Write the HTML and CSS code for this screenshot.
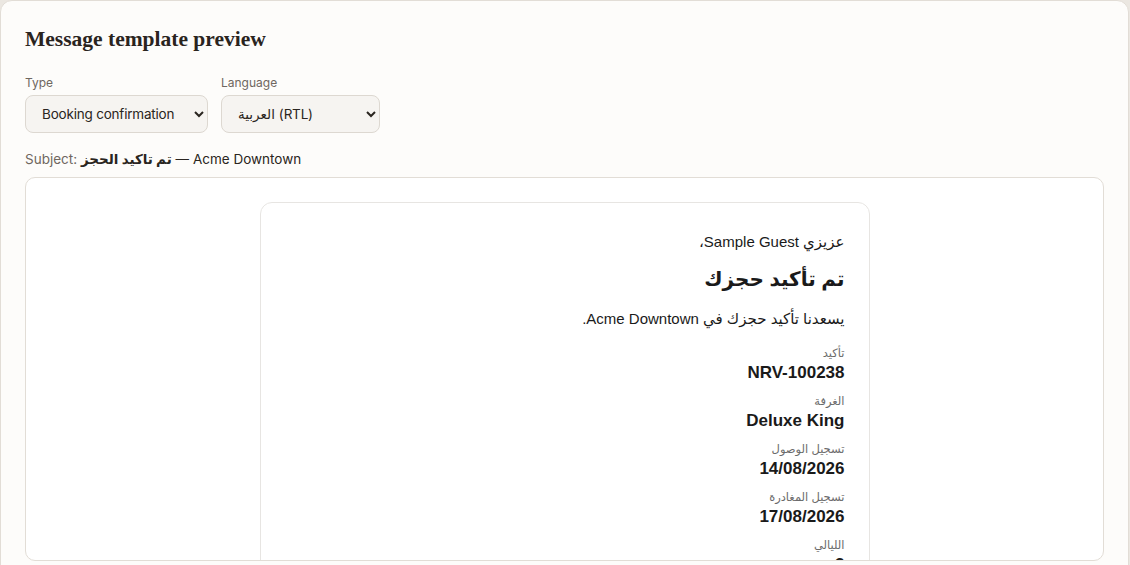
FILE: index.html
```html
<!DOCTYPE html>
<html lang="en">
<head>
  <meta charset="UTF-8" />
  <meta name="viewport" content="width=device-width, initial-scale=1.0" />
  <title>Message template preview</title>
  <link rel="stylesheet" href="styles.css">
</head>
<body>
  <section class="panel">
    <h2>Message template preview</h2>

    <div class="controls">
      <label class="field">
        <span>Type</span>
        <select class="type-select">
          <option>Booking confirmation</option>
        </select>
      </label>
      <label class="field">
        <span>Language</span>
        <select class="lang-select">
          <option>العربية (RTL)</option>
        </select>
      </label>
    </div>

    <div class="subject">Subject: <span class="subject-text"><b>تم تاكيد الحجز</b> — Acme Downtown</span></div>

    <div class="preview">
      <div class="email" dir="rtl">
        <p class="greeting">عزيزي Sample Guest،</p>
        <h3>تم تأكيد حجزك</h3>
        <p class="intro">يسعدنا تأكيد حجزك في Acme Downtown.</p>

        <div class="detail">
          <div class="detail-label">تأكيد</div>
          <div class="detail-value">NRV-100238</div>
        </div>
        <div class="detail">
          <div class="detail-label">الغرفة</div>
          <div class="detail-value">Deluxe King</div>
        </div>
        <div class="detail">
          <div class="detail-label">تسجيل الوصول</div>
          <div class="detail-value">14/08/2026</div>
        </div>
        <div class="detail">
          <div class="detail-label">تسجيل المغادرة</div>
          <div class="detail-value">17/08/2026</div>
        </div>
        <div class="detail">
          <div class="detail-label">الليالي</div>
          <div class="detail-value">3</div>
        </div>
      </div>
    </div>
  </section>
</body>
</html>
```

FILE: styles.css
```css
body {
  margin: 0;
  padding: 0;
  background: #ebe7e1;
  font-family: Inter, "Noto Sans", "DejaVu Sans", sans-serif;
  color: #2a2520;
  height: 565px;
  overflow: hidden;
}

.panel {
  background: #fdfcfa;
  border: 1px solid #e2ddd6;
  border-radius: 12px;
  padding: 23px 24px 40px;
  margin-right: 1px;
}

h2 {
  margin: 0 0 22px;
  font-family: "Liberation Serif", "DejaVu Serif", serif;
  font-size: 21.5px;
  font-weight: bold;
  color: #2a241e;
  line-height: 30px;
}

.controls {
  display: flex;
  gap: 13px;
}

.field {
  display: flex;
  flex-direction: column;
  gap: 5px;
}

.field span {
  font-size: 12px;
  color: #6f675f;
  line-height: 14px;
}

.field select {
  height: 38px;
  padding: 0 6px 0 12px;
  border: 1px solid #ddd8d1;
  border-radius: 8px;
  background: #f6f4f1;
  font-family: Inter, "Noto Sans", "DejaVu Sans", sans-serif;
  font-size: 13.5px;
  letter-spacing: -0.2px;
  color: #2a2520;
}

.type-select {
  width: 183px;
}

.lang-select {
  width: 159px;
}

.subject {
  margin-top: 18px;
  font-size: 13.5px;
  color: #6f675f;
  line-height: 17px;
}

.subject-text {
  color: #2a2520;
}

.preview {
  margin-top: 9px;
  height: 384px;
  overflow: hidden;
  background: #fff;
  border: 1px solid #e2ddd6;
  border-radius: 10px;
  padding-top: 24px;
  box-sizing: border-box;
}

.email {
  width: 560px;
  margin: 0 auto;
  border: 1px solid #e7e5e2;
  border-radius: 12px;
  padding: 24px;
  font-family: "Liberation Sans", "DejaVu Sans", sans-serif;
  color: #1a1a1a;
}

.greeting {
  margin: 5px 0 0;
  font-size: 15px;
  line-height: 20px;
}

h3 {
  margin: 14px 0 0;
  font-size: 20px;
  line-height: 26px;
  font-weight: bold;
}

.intro {
  margin: 16px 0 0;
  font-size: 15px;
  line-height: 22px;
}

.detail {
  margin-top: 15px;
}

.detail + .detail {
  margin-top: 8px;
}

.detail-label {
  font-size: 11.5px;
  color: #6b6b6b;
  line-height: 16px;
}

.detail-value {
  font-size: 17px;
  font-weight: bold;
  line-height: 24px;
}
```
